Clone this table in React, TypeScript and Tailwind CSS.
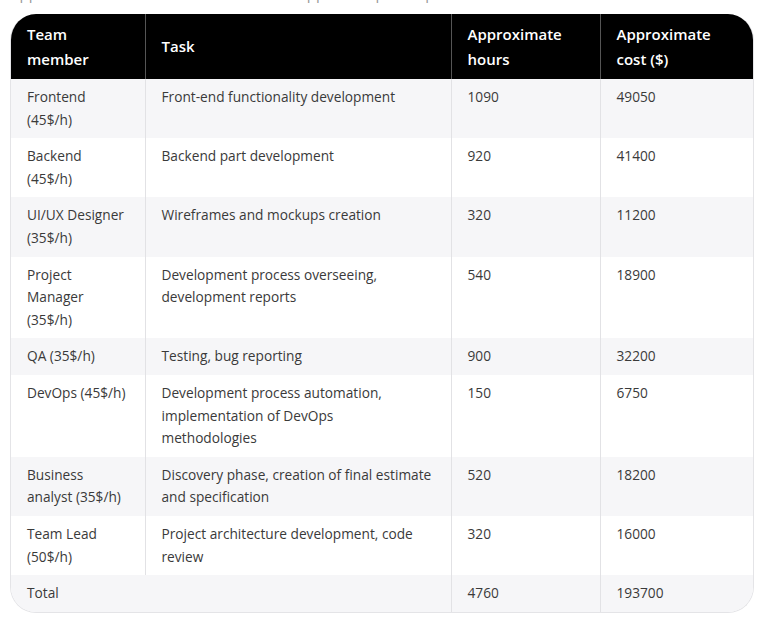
import React from "react";

type Row = { member: string[]; task: string[]; hours: string; cost: string };

const rows: Row[] = [
  { member: ["Frontend", "(45$/h)"], task: ["Front-end functionality development"], hours: "1090", cost: "49050" },
  { member: ["Backend", "(45$/h)"], task: ["Backend part development"], hours: "920", cost: "41400" },
  { member: ["UI/UX Designer", "(35$/h)"], task: ["Wireframes and mockups creation"], hours: "320", cost: "11200" },
  { member: ["Project", "Manager", "(35$/h)"], task: ["Development process overseeing,", "development reports"], hours: "540", cost: "18900" },
  { member: ["QA (35$/h)"], task: ["Testing, bug reporting"], hours: "900", cost: "32200" },
  { member: ["DevOps (45$/h)"], task: ["Development process automation,", "implementation of DevOps", "methodologies"], hours: "150", cost: "6750" },
  { member: ["Business", "analyst (35$/h)"], task: ["Discovery phase, creation of final estimate", "and specification"], hours: "520", cost: "18200" },
  { member: ["Team Lead", "(50$/h)"], task: ["Project architecture development, code", "review"], hours: "320", cost: "16000" },
];

function Lines({ lines }: { lines: string[] }) {
  return (
    <>
      {lines.map((l, i) => (
        <div key={i} className="whitespace-nowrap">
          {l}
        </div>
      ))}
    </>
  );
}

export default function App() {
  const font = { fontFamily: '"Open Sans", "Liberation Sans", sans-serif' };
  return (
    <div className="w-[768px] h-[641px] bg-white overflow-hidden" style={font}>
      <div className="h-[4px] overflow-hidden">
        <p className="-mt-[17px] pl-[10px] text-[15px] leading-[20px] text-[#9a9a9a] whitespace-nowrap">
          Approximate team work estimate for the app development process
        </p>
      </div>
      <div className="h-[10px]" />
      <div className="ml-[10px] w-[744px] rounded-[26px] overflow-hidden border border-[#e4e4e7] border-t-0">
        <table className="w-full table-fixed border-collapse text-[#3a3a3a]">
          <colgroup>
            <col className="w-[134px]" />
            <col className="w-[306px]" />
            <col className="w-[149px]" />
            <col />
          </colgroup>
          <thead>
            <tr className="bg-black text-white text-[15px] leading-[25px] h-[65px]">
              <th className="text-left align-middle px-4 py-[7px] font-semibold">
                Team
                <br />
                member
              </th>
              <th className="text-left align-middle px-4 py-[7px] border-l border-[#555555] font-semibold">Task</th>
              <th className="text-left align-middle px-4 py-[7px] border-l border-[#555555] font-semibold">
                Approximate
                <br />
                hours
              </th>
              <th className="text-left align-middle px-4 py-[7px] border-l border-[#555555] font-semibold">
                Approximate
                <br />
                cost ($)
              </th>
            </tr>
          </thead>
          <tbody className="text-[13.7px] leading-[22.6px]">
            {rows.map((r, i) => (
              <tr key={i} className={i % 2 === 0 ? "bg-[#f6f6f8]" : "bg-white"}>
                <td className="align-top px-4 py-[7px]">
                  <Lines lines={r.member} />
                </td>
                <td className="align-top px-4 py-[7px] border-l border-[#e2e2e5]">
                  <Lines lines={r.task} />
                </td>
                <td className="align-top px-4 py-[7px] border-l border-[#e2e2e5]">{r.hours}</td>
                <td className="align-top px-4 py-[7px] border-l border-[#e2e2e5]">{r.cost}</td>
              </tr>
            ))}
            <tr className="bg-[#f6f6f8]">
              <td colSpan={2} className="align-top px-4 py-[7px]">
                Total
              </td>
              <td className="align-top px-4 py-[7px] border-l border-[#e2e2e5]">4760</td>
              <td className="align-top px-4 py-[7px] border-l border-[#e2e2e5]">193700</td>
            </tr>
          </tbody>
        </table>
      </div>
    </div>
  );
}
